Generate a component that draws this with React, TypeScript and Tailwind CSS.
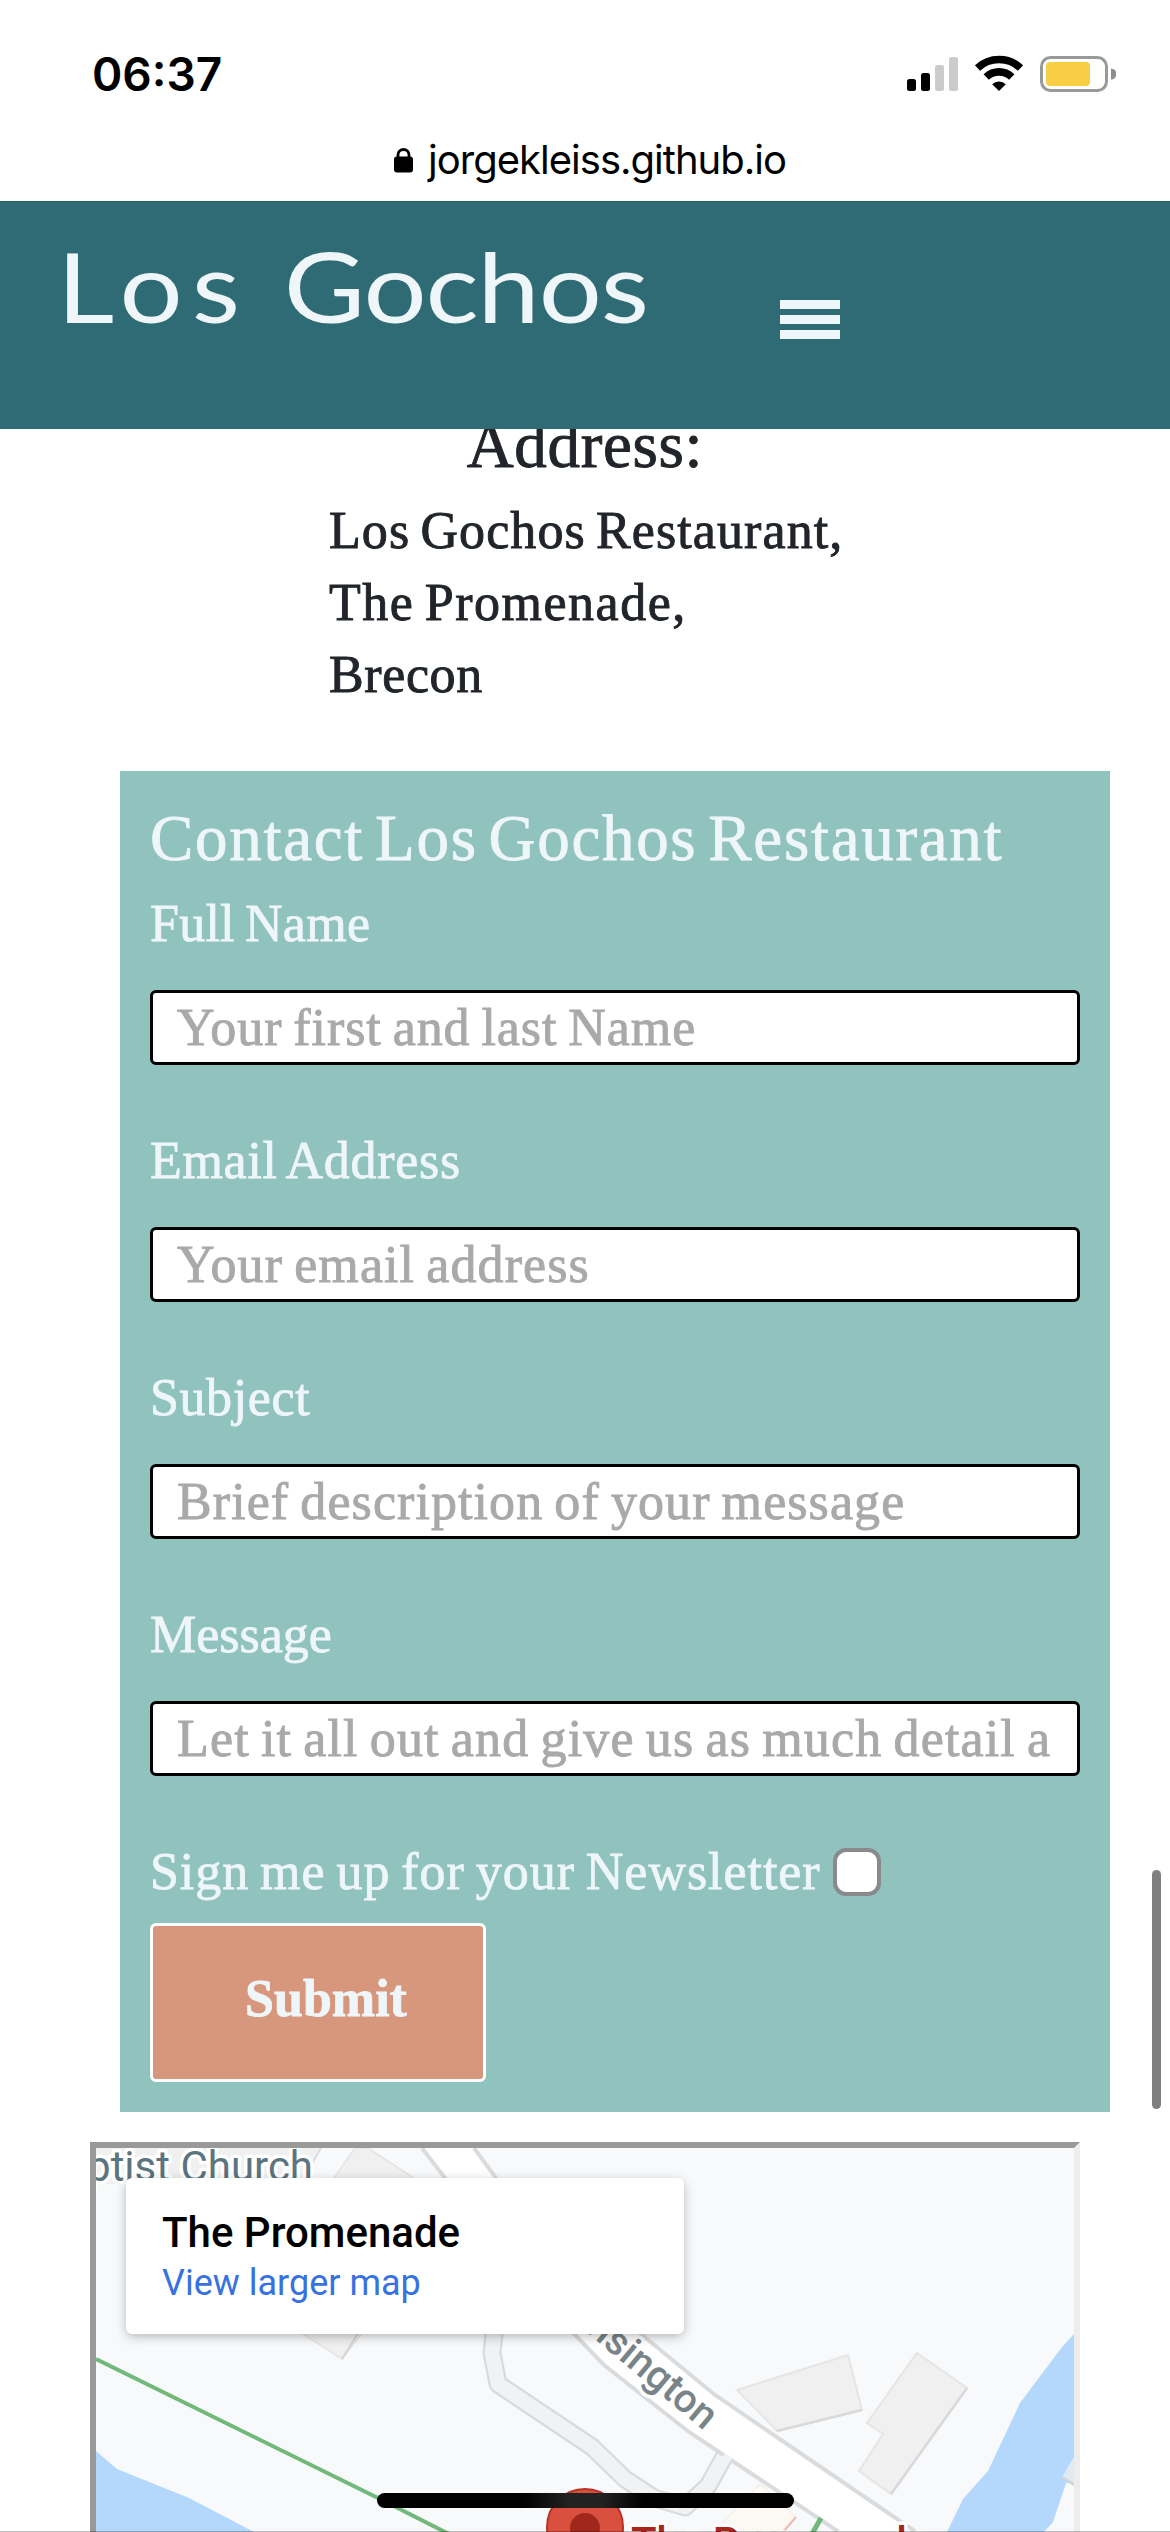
import React from "react";

const fields = [
  { label: "Full Name", hint: "Your first and last Name", ls: "tracking-[0.25px]", ps: "placeholder:tracking-[0.93px]" },
  { label: "Email Address", hint: "Your email address", ls: "tracking-[0.7px]", ps: "placeholder:tracking-[1.1px]" },
  { label: "Subject", hint: "Brief description of your message", ls: "tracking-[0.6px]", ps: "placeholder:tracking-[1.08px]" },
  { label: "Message", hint: "Let it all out and give us as much detail a", ls: "tracking-[0px]", ps: "placeholder:tracking-[1.15px]" },
];

function StatusBar() {
  return (
    <div className="flex h-[128px] items-start justify-between pl-[92px] pr-[54px] font-[Inter,sans-serif] text-black">
      <span className="mt-[46px] text-[46px] font-semibold leading-[56px]">06:37</span>
      <svg className="mt-[50px]" width="210" height="46" viewBox="906 50 210 46">
        <rect x="907" y="79" width="9" height="12" rx="2.5" />
        <rect x="921" y="73" width="9" height="18" rx="2.5" />
        <rect x="935" y="65" width="9" height="26" rx="2.5" fill="#cbcbcb" />
        <rect x="949" y="57" width="9" height="34" rx="2.5" fill="#cbcbcb" />
        <g fill="none" stroke="#000" strokeWidth="7.6">
          <path d="M977.500 68 A31.500 31.500 0 0 1 1020.500 68" />
          <path d="M986.200 77 A18.500 18.500 0 0 1 1011.800 77" />
        </g>
        <path d="M999 91 L992.200 84.200 A9.600 9.600 0 0 1 1005.800 84.200 Z" />
        <rect x="1041.500" y="57.500" width="65" height="33" rx="9" fill="none" stroke="#999" strokeWidth="3" />
        <rect x="1046" y="62" width="44" height="24" rx="4" fill="#f8ce46" />
        <path d="M1111 68.500 a5.500 5.500 0 0 1 0 11 Z" fill="#8e8e8e" />
      </svg>
    </div>
  );
}

function AddressBar() {
  return (
    <div className="flex h-[73px] items-start gap-[15px] pl-[394px] font-[Inter,sans-serif]">
      <svg className="mt-[20px]" width="19" height="25" viewBox="0 0 19 25">
        <rect x="0" y="8.500" width="19" height="16" rx="3" />
        <path d="M4 10 V7 a5.500 5.500 0 0 1 11 0 V10" fill="none" stroke="#000" strokeWidth="2.800" />
      </svg>
      <span className="mt-[8px] text-[40px] leading-[48px] tracking-[-0.98px] text-black">jorgekleiss.github.io</span>
    </div>
  );
}

function MapView() {
  return (
    <div className="relative ml-[90px] mt-[30px] h-[390px] w-[990px] border-x-[6px] border-t-[6px] border-l-[#999] border-r-[#ededed] border-t-[#999] bg-[#f8f9fb]">
      <svg className="block font-[Roboto,sans-serif]" width="978" height="384" viewBox="96 2148 978 384">
        <path d="M96 2148 H321 L300 2184 H96Z" fill="#f0f0f0" />
        <path d="M321 2148 L300 2184" stroke="#dcdcde" strokeWidth="2" />
        <path d="M355 2148 H368 L414 2178 L450 2220 L342 2359 L303 2334 L334 2178Z" fill="#f0f0f0" stroke="#e4e4e4" strokeWidth="1.500" />
        <path d="M342 2359 L360 2330" stroke="#d4d5d8" strokeWidth="2" />
        <path d="M96 2451 L117 2469 L189 2498 L254 2532 H96Z" fill="#b3d8fc" />
        <path d="M1074 2334 L1062 2347 L1020 2403 L988 2471 L963 2499 L947 2532 H1044 L1053 2522 L1066 2483 H1074Z" fill="#b3d8fc" />
        <path d="M1074 2457 L1062 2477 L1076 2486Z" fill="#e1e9f1" />
        <path d="M1062 2477 L1076 2486" stroke="#d0d4da" strokeWidth="2.500" />
        <path d="M760 2484 L796 2517 L784 2532 H723 V2522Z" fill="#fcf9f2" stroke="#efe6dc" strokeWidth="1" />
        <path d="M796 2517 L783 2532" stroke="#eeb9b3" strokeWidth="2" />
        <path d="M495 2325 L492 2353 L498 2384 L592 2447 L625 2479 L654 2498 L685 2507 L708 2486 L728 2450" fill="none" stroke="#d9dadc" strokeWidth="19" strokeLinejoin="round" />
        <path d="M495 2325 L492 2353 L498 2384 L592 2447 L625 2479 L654 2498 L685 2507 L708 2486 L730 2446" fill="none" stroke="#f1f2f4" strokeWidth="14.500" strokeLinejoin="round" />
        <path d="M422 2148 L445 2178 L574 2334 L604 2365 L689 2432 L842 2532 H916 L715 2395 L641 2334 L496 2178 L474 2148Z" fill="#fff" />
        <path d="M422 2148 L445 2178 L574 2334 L604 2365 L689 2432 L842 2534 M916 2532 L715 2395 L641 2334 L496 2178 L474 2148" fill="none" stroke="#dadbdd" strokeWidth="4" />
        <path d="M724 2455 L731 2460" stroke="#f1f2f4" strokeWidth="5" />
        <path d="M737 2390 L848 2355 L862 2410 L777 2431Z" fill="#f0f0f0" stroke="#e5e5e5" strokeWidth="2" />
        <path d="M862 2410 L777 2431" stroke="#d9d9db" strokeWidth="2.500" />
        <path d="M917 2353 L967 2388 L891 2494 L859 2471 L883 2434 L867 2423Z" fill="#f0f0f0" stroke="#e5e5e5" strokeWidth="2" />
        <path d="M967 2388 L891 2494" stroke="#d9d9db" strokeWidth="2.500" />
        <path d="M96 2359 L378 2498 L449 2534" fill="none" stroke="#71b97b" strokeWidth="4" />
        <path d="M821 2518 L812 2534" stroke="#71b97b" strokeWidth="5" />
        <text x="313" y="2181" textAnchor="end" fontSize="42" fill="#5c747f" stroke="#fff" strokeWidth="7" strokeLinejoin="round" paintOrder="stroke">Baptist Church</text>
        <text transform="translate(704 2431) rotate(40)" textAnchor="end" fontSize="40" fontWeight="500" fill="#788488" stroke="#fff" strokeWidth="7" strokeLinejoin="round" paintOrder="stroke">Kensington</text>
        <circle cx="585" cy="2527" r="38" fill="#d9503f" stroke="#b83127" strokeWidth="2" />
        <circle cx="585" cy="2528" r="15" fill="#a0271c" />
        <text x="631" y="2557" fontSize="42" fontWeight="500" fill="#a8261d" stroke="#fff" strokeWidth="7" strokeLinejoin="round" paintOrder="stroke">The Promenade</text>
      </svg>
      <div className="absolute left-[30px] top-[30px] flex h-[156px] w-[558px] flex-col rounded-[6px] bg-white pl-[36px] pt-[31px] font-[Roboto,sans-serif] shadow-[0_3px_12px_-1px_rgba(0,0,0,0.3)]">
        <span className="text-[42px] font-medium leading-[48px] text-black">The Promenade</span>
        <span className="mt-[2px] text-[36px] leading-[48px] text-[#3871e0]">View larger map</span>
      </div>
    </div>
  );
}

export default function App() {
  return (
    <div className="relative h-[2532px] w-[1170px] overflow-hidden bg-white font-['Liberation_Serif',serif]">
      <StatusBar />
      <AddressBar />
      <header className="relative z-10 flex h-[228px] items-start border-t border-[#2a5f68] bg-[#2e6b74] pl-[57px] text-[#eff6fa]">
        <span className="mt-[26px] w-[723px] origin-left scale-x-[1.16] whitespace-nowrap font-[Lato,sans-serif] text-[96px] leading-[116px] tracking-[-0.9px] [word-spacing:6px]">
          <span className="tracking-[8px]">Los</span> Gochos
        </span>
        <div className="mt-[98px] flex w-[60px] flex-col gap-[6px]">
          <i className="h-[9px] bg-[#eff6fa]" />
          <i className="h-[9px] bg-[#eff6fa]" />
          <i className="h-[9px] bg-[#eff6fa]" />
        </div>
      </header>

      <section className="-mt-[23px] h-[365px] text-[#212529] [-webkit-text-stroke:0.9px_#212529]">
        <h2 className="h-[89px] text-center text-[65px] leading-[78px] tracking-[0.7px]">Address:</h2>
        <div className="ml-[329px] text-[52px] leading-[72px] tracking-[1.1px] [word-spacing:-4px]">
          <p>Los Gochos Restaurant,</p>
          <p className="tracking-[1.5px]">The Promenade,</p>
          <p className="tracking-[0.6px]">Brecon</p>
        </div>
      </section>

      <form className="ml-[120px] flex h-[1341px] w-[990px] flex-col bg-[#91c3be] px-[30px] text-[#eff6fa]">
        <h2 className="mt-[28px] h-[89px] whitespace-nowrap text-[65px] leading-[78px] tracking-[1.7px] [word-spacing:-7px] [-webkit-text-stroke:0.8px_#eff6fa]">
          Contact Los Gochos Restaurant
        </h2>
        {fields.map((f) => (
          <label key={f.label} className="flex h-[237px] flex-col text-[52px] leading-[72px] [word-spacing:-3px]">
            <span className={`[-webkit-text-stroke:0.8px_#eff6fa] ${f.ls}`}>{f.label}</span>
            <input
              placeholder={f.hint}
              className={`mt-[30px] h-[75px] w-full rounded-[6px] border-[3px] border-black bg-white px-[24px] text-[52px] [word-spacing:-3px] placeholder:text-[#a9a9a9] placeholder:[-webkit-text-stroke:0.9px_#a9a9a9] ${f.ps}`}
            />
          </label>
        ))}
        <label className="flex h-[87px] whitespace-nowrap text-[52px] leading-[72px] tracking-[0.95px] [word-spacing:-3px] [-webkit-text-stroke:0.8px_#eff6fa]">
          <span className="w-[683px]">Sign me up for your Newsletter</span>
          <span className="mt-[12px] h-[48px] w-[48px] rounded-[13px] border-[4px] border-[#8a8a8c] bg-white" />
        </label>
        <button type="button" className="h-[159px] w-[336px] rounded-[6px] border-[3px] border-white bg-[#d7977c] pb-[8px] pl-[16px] text-center text-[52px] font-bold leading-[72px] [-webkit-text-stroke:0.8px_#eff6fa]">
          Submit
        </button>
      </form>

      <MapView />

      <div className="absolute left-[1152px] top-[1870px] h-[239px] w-[9px] rounded-full bg-[#7f7f7f]" />
      <div className="absolute left-[377px] top-[2493px] h-[15px] w-[417px] rounded-full bg-[linear-gradient(90deg,#000_35%,#222_46%,#222_54%,#000_64%)]" />
      <div className="absolute bottom-0 left-0 h-px w-full bg-black/25" />
    </div>
  );
}
